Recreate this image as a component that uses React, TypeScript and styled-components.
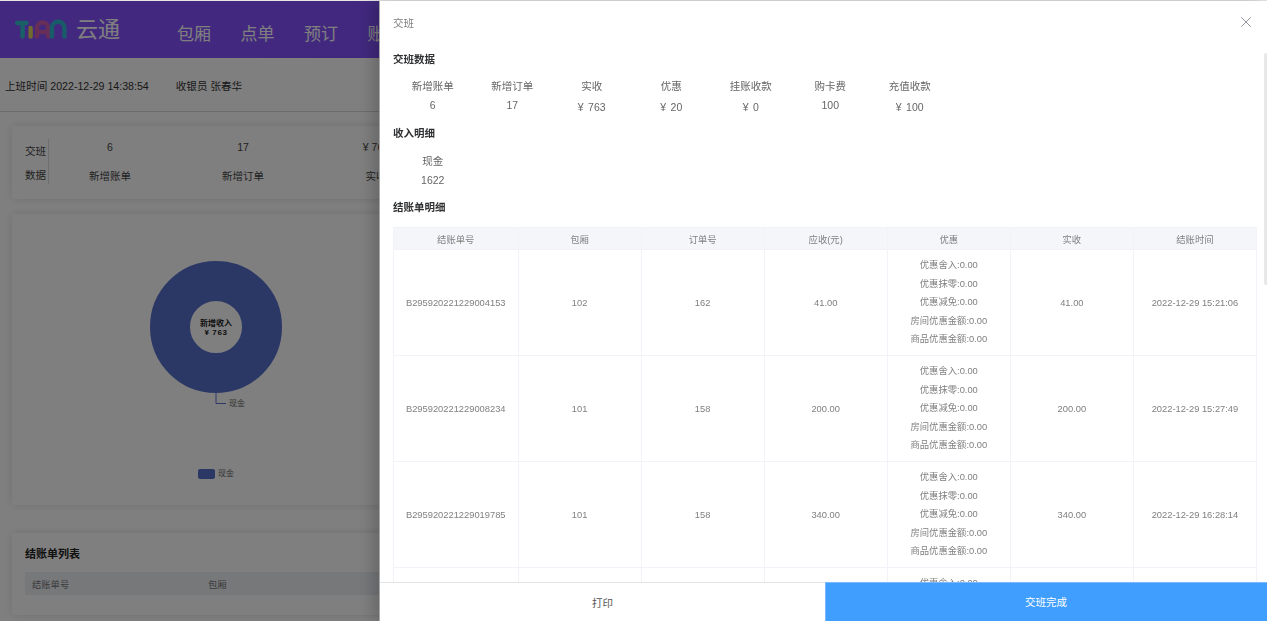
import styled, { createGlobalStyle } from "styled-components";
import { X } from "lucide-react";

const GlobalStyle = createGlobalStyle`
  html, body {
    margin: 0;
    padding: 0;
    height: 100%;
    overflow: hidden;
    background: #fff;
  }
  * { box-sizing: border-box; }
  body {
    font-family: "Liberation Sans", "Noto Sans CJK SC", sans-serif;
    font-size: 10.5px;
    color: #333;
  }
`;

const Page = styled.div`
  height: 621px;
  overflow: hidden;
  border-top: 1px solid #e6e6e6;
`;

const TopBar = styled.header`
  height: 57px;
  display: flex;
  align-items: center;
  padding-left: 15px;
  background: linear-gradient(90deg, #8552fe, #7f4cf8);
`;

const BrandName = styled.span`
  margin: 0 57px 6px 9px;
  font-size: 22px;
  color: #fff;
`;

const NavItem = styled.a`
  font-size: 17px;
  color: #fff;
  margin-right: 29.5px;
  padding-top: 6px;
  white-space: nowrap;
`;

const InfoRow = styled.div`
  height: 54px;
  display: flex;
  align-items: center;
  gap: 27px;
  padding: 1px 0 0 5px;
  border-bottom: 1px solid #d8d8d8;
  font-size: 10.6px;
`;

const Content = styled.main`
  height: 504px;
  padding: 14px 12px 0;
  display: flex;
  flex-direction: column;
`;

const Card = styled.section`
  background: #fff;
  border-radius: 2px;
  box-shadow: 0 0 8px rgba(0, 0, 0, 0.12);
`;

const SummaryCard = styled(Card)`
  height: 73px;
  display: flex;
  align-items: center;
  padding: 0 0 2px 13px;
`;

const SummaryTitle = styled.div`
  width: 24px;
  height: 45px;
  line-height: 24px;
  border-right: 1px solid #ddd;
  color: #444;
`;

const SummaryCol = styled.div`
  width: 122px;
  margin-right: 11px;
  text-align: center;
  line-height: 29px;
  color: #444;
`;

const ChartCard = styled(Card)`
  height: 291px;
  margin-top: 15px;
`;

const ListCard = styled(Card)`
  height: 82px;
  margin-top: 28px;
  padding: 13px 13px 0;
`;

const ListTitle = styled.h3`
  margin: 0 0 10px;
  font-size: 11px;
  line-height: 16px;
  font-weight: 600;
  color: #222;
`;

const ListHead = styled.div`
  height: 23px;
  display: flex;
  align-items: center;
  padding-left: 7px;
  background: #edf0f5;
  font-size: 9.3px;
  color: #777;
`;

const ListCell = styled.span`
  width: 176px;
`;

const Scrim = styled.div`
  position: fixed;
  inset: 1px 0 0 0;
  background: rgba(0, 0, 0, 0.5);
`;

const Drawer = styled.aside`
  position: fixed;
  top: 1px;
  bottom: 0;
  left: 380px;
  right: 0;
  display: flex;
  flex-direction: column;
  background: #fff;
  box-shadow: -1px 0 0 #a8a8a8, -6px 0 16px rgba(0, 0, 0, 0.22);
`;

const DrawerHead = styled.div`
  height: 42px;
  flex: none;
  display: flex;
  align-items: center;
  justify-content: space-between;
  padding: 0 12px 0 13px;
  color: #808080;
`;

const DrawerBody = styled.div`
  flex: 1;
  min-height: 0;
  overflow: hidden;
  padding: 7px 10px 0 13px;
`;

const ScrollThumb = styled.div`
  position: absolute;
  top: 52px;
  right: 0;
  width: 3px;
  height: 232px;
  background: #e8e8e8;
  border-radius: 2px 0 0 2px;
`;

const SectionTitle = styled.h4`
  margin: 0;
  font-size: 10.5px;
  line-height: 18px;
  font-weight: 600;
  color: #303133;
`;

const StatRow = styled.div`
  display: flex;
  height: 56px;
  padding-top: 9px;
`;

const IncomeRow = styled(StatRow)`
  padding-top: 10px;
`;

const Stat = styled.div`
  width: 79.5px;
  text-align: center;
  color: #666;
`;

const StatLabel = styled.div`
  line-height: 18px;
`;

const StatValue = styled.div<{ $money?: boolean }>`
  line-height: 18px;
  margin-top: ${(p) => (p.$money ? 3 : 1)}px;
  word-spacing: ${(p) => (p.$money ? 1.5 : 0)}px;
`;

const DetailTable = styled.table`
  width: 864px;
  margin-top: 11px;
  table-layout: fixed;
  border-collapse: collapse;
  font-size: 9.33px;
  color: #808080;
  text-align: center;

  th, td {
    border: 1px solid #f2f3f8;
    padding: 0;
    font-weight: 400;
  }
  th {
    height: 22px;
    background: #f5f6fa;
  }
  th:first-child {
    width: 124.5px;
  }
  td {
    height: 106px;
    padding: 6px 0;
  }
`;

const DiscountLine = styled.div`
  line-height: 18.6px;
`;

const DrawerFoot = styled.div`
  height: 39px;
  flex: none;
  display: flex;
  border-top: 1px solid #e4e4e4;
`;

const FootButton = styled.button<{ $primary?: boolean }>`
  width: ${(p) => (p.$primary ? "442px" : "445px")};
  margin-top: ${(p) => (p.$primary ? "-1px" : "0")};
  height: ${(p) => (p.$primary ? "39px" : "38px")};
  border: 0;
  font: inherit;
  padding: 0;
  color: ${(p) => (p.$primary ? "#fff" : "#555")};
  background: ${(p) => (p.$primary ? "#409eff" : "#fff")};
  box-shadow: ${(p) => (p.$primary ? "inset 1px 1px 0 #79b8ff" : "none")};
`;

const stats = [
  { label: "新增账单", value: "6" },
  { label: "新增订单", value: "17" },
  { label: "实收", value: "¥ 763", money: true },
  { label: "优惠", value: "¥ 20", money: true },
  { label: "挂账收款", value: "¥ 0", money: true },
  { label: "购卡费", value: "100" },
  { label: "充值收款", value: "¥ 100", money: true },
];

const columns = ["结账单号", "包厢", "订单号", "应收(元)", "优惠", "实收", "结账时间"];

const discounts = ["优惠舍入", "优惠抹零", "优惠减免", "房间优惠金额", "商品优惠金额"];

const bills = [
  { no: "B295920221229004153", room: "102", order: "162", due: "41.00", paid: "41.00", time: "2022-12-29 15:21:06" },
  { no: "B295920221229008234", room: "101", order: "158", due: "200.00", paid: "200.00", time: "2022-12-29 15:27:49" },
  { no: "B295920221229019785", room: "101", order: "158", due: "340.00", paid: "340.00", time: "2022-12-29 16:28:14" },
  { no: "", room: "", order: "", due: "", paid: "", time: "" },
];

function Logo() {
  return (
    <svg width="52" height="22" viewBox="0 0 52 22" fill="none" strokeWidth="4.4" strokeLinecap="round">
      <path d="M2.2 4H11.5M7.6 4V17.5" stroke="#35c3cf" />
      <path d="M15.6 9V17.5" stroke="#e6d75a" />
      <path d="M22 17.5V9a5.5 5.5 0 0 1 11 0V17.5M22 13H33" stroke="#cf5cb4" />
      <path d="M37 17.5V9a6.2 6.2 0 0 1 12.4 0V17.5" stroke="#33b8d2" />
    </svg>
  );
}

function DonutChart() {
  return (
    <svg width="408" height="291" viewBox="0 0 408 291" fontFamily='"Liberation Sans", "Noto Sans CJK SC", sans-serif'>
      <circle cx="204" cy="113" r="46" fill="none" stroke="#5670cc" strokeWidth="40" />
      <text x="204" y="112" textAnchor="middle" fontSize="8" fontWeight="700" fill="#222">新增收入</text>
      <text x="204" y="121" textAnchor="middle" fontSize="8" fontWeight="700" fill="#222" letterSpacing="0.6">¥ 763</text>
      <path d="M204 179V189.5H214" fill="none" stroke="#5670cc" />
      <text x="217" y="191.5" fontSize="8" fill="#666">现金</text>
      <rect x="186" y="255" width="17" height="10" rx="2" fill="#5670cc" />
      <text x="206" y="262" fontSize="8" fill="#666">现金</text>
    </svg>
  );
}

export default function App() {
  return (
    <>
      <GlobalStyle />
      <Page>
        <TopBar>
          <Logo />
          <BrandName>云通</BrandName>
          <NavItem>包厢</NavItem>
          <NavItem>点单</NavItem>
          <NavItem>预订</NavItem>
          <NavItem>账单</NavItem>
        </TopBar>
        <InfoRow>
          <span>上班时间 2022-12-29 14:38:54</span>
          <span>收银员 张春华</span>
        </InfoRow>
        <Content>
          <SummaryCard>
            <SummaryTitle>交班<br />数据</SummaryTitle>
            <SummaryCol>6<br />新增账单</SummaryCol>
            <SummaryCol>17<br />新增订单</SummaryCol>
            <SummaryCol>¥ 763<br />实收</SummaryCol>
          </SummaryCard>
          <ChartCard>
            <DonutChart />
          </ChartCard>
          <ListCard>
            <ListTitle>结账单列表</ListTitle>
            <ListHead>
              <ListCell>结账单号</ListCell>
              <ListCell>包厢</ListCell>
            </ListHead>
          </ListCard>
        </Content>
      </Page>
      <Scrim />
      <Drawer>
        <DrawerHead>
          <span>交班</span>
          <X size={18} strokeWidth={1.3} color="#909399" />
        </DrawerHead>
        <ScrollThumb />
        <DrawerBody>
          <SectionTitle>交班数据</SectionTitle>
          <StatRow>
            {stats.map((s) => (
              <Stat key={s.label}>
                <StatLabel>{s.label}</StatLabel>
                <StatValue $money={s.money}>{s.value}</StatValue>
              </Stat>
            ))}
          </StatRow>
          <SectionTitle>收入明细</SectionTitle>
          <IncomeRow>
            <Stat>
              <StatLabel>现金</StatLabel>
              <StatValue>1622</StatValue>
            </Stat>
          </IncomeRow>
          <SectionTitle>结账单明细</SectionTitle>
          <DetailTable>
            <thead>
              <tr>
                {columns.map((c) => (
                  <th key={c}>{c}</th>
                ))}
              </tr>
            </thead>
            <tbody>
              {bills.map((b, i) => (
                <tr key={i}>
                  <td>{b.no}</td>
                  <td>{b.room}</td>
                  <td>{b.order}</td>
                  <td>{b.due}</td>
                  <td>
                    {discounts.map((d) => (
                      <DiscountLine key={d}>{d}:0.00</DiscountLine>
                    ))}
                  </td>
                  <td>{b.paid}</td>
                  <td>{b.time}</td>
                </tr>
              ))}
            </tbody>
          </DetailTable>
        </DrawerBody>
        <DrawerFoot>
          <FootButton>打印</FootButton>
          <FootButton $primary>交班完成</FootButton>
        </DrawerFoot>
      </Drawer>
    </>
  );
}
